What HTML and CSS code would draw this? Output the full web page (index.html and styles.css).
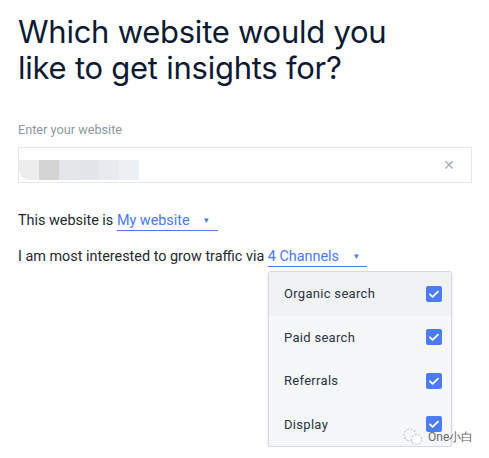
FILE: index.html
```html
<!DOCTYPE html>
<html lang="en">
<head>
  <meta charset="UTF-8">
  <meta name="viewport" content="width=device-width, initial-scale=1.0">
  <link rel="stylesheet" href="styles.css">
  <title>Get insights</title>
</head>
<body>
  <div class="container">
    <h1 class="title">Which website would you<br>like to get insights for?</h1>

    <label class="field-label" for="site">Enter your website</label>
    <div class="field">
      <div class="blur">
        <span class="px px1"></span><span class="px px2"></span><span class="px px3"></span><span class="px px4"></span><span class="px px5"></span><span class="px px6"></span>
      </div>
      <span class="clear">&#x2715;</span>
    </div>

    <div class="line">This website is <span class="select select-site">My website <span class="caret">&#9662;</span></span></div>
    <div class="line">I am most interested to grow traffic via <span class="select select-channels">4 Channels <span class="caret">&#9662;</span></span></div>

    <div class="dropdown">
      <div class="dropdown-item active">Organic search <span class="check"><svg viewBox="0 0 16 16" width="16" height="16"><path d="M4 8.3l2.6 2.5L12 5.6" fill="none" stroke="#fff" stroke-width="1.8" stroke-linecap="round" stroke-linejoin="round"/></svg></span></div>
      <div class="dropdown-item">Paid search <span class="check"><svg viewBox="0 0 16 16" width="16" height="16"><path d="M4 8.3l2.6 2.5L12 5.6" fill="none" stroke="#fff" stroke-width="1.8" stroke-linecap="round" stroke-linejoin="round"/></svg></span></div>
      <div class="dropdown-item">Referrals <span class="check"><svg viewBox="0 0 16 16" width="16" height="16"><path d="M4 8.3l2.6 2.5L12 5.6" fill="none" stroke="#fff" stroke-width="1.8" stroke-linecap="round" stroke-linejoin="round"/></svg></span></div>
      <div class="dropdown-item">Display <span class="check"><svg viewBox="0 0 16 16" width="16" height="16"><path d="M4 8.3l2.6 2.5L12 5.6" fill="none" stroke="#fff" stroke-width="1.8" stroke-linecap="round" stroke-linejoin="round"/></svg></span></div>
    </div>
  </div>

  <div class="watermark">
    <svg viewBox="0 0 22 18" width="22" height="18"><circle cx="8" cy="7" r="6" fill="none" stroke="#c8c8c8" stroke-width="1.2" stroke-dasharray="2 1.5"/><circle cx="14.5" cy="11.5" r="5" fill="rgba(255,255,255,0.7)" stroke="#c8c8c8" stroke-width="1.2" stroke-dasharray="2 1.5"/></svg>
    <span>One小白</span>
  </div>
</body>
</html>
```

FILE: styles.css
```css
body {
  margin: 0;
  padding: 0;
  background: #fff;
  font-family: Roboto, "Liberation Sans", sans-serif;
  color: #2a2f36;
}

.container {
  padding: 14px 18px 0;
}

.title {
  margin: 0;
  font-family: Inter, "Open Sans", sans-serif;
  font-weight: 400;
  font-size: 31px;
  line-height: 36px;
  color: #0c1a33;
  letter-spacing: -0.25px;
}

.field-label {
  display: block;
  margin-top: 37px;
  font-size: 12.7px;
  line-height: 14px;
  color: #8e97a3;
}

.field {
  margin-top: 10px;
  border: 1px solid #e3e6ea;
  display: flex;
  align-items: center;
  justify-content: space-between;
  width: 454px;
  box-sizing: border-box;
  height: 36px;
}

.blur {
  display: flex;
  height: 100%;
  align-items: flex-end;
}

.px {
  display: block;
  width: 20px;
  height: 20px;
  margin-bottom: 2px;
}

.px1 { background: #ededed; border-radius: 0 0 0 10px; }
.px2 { background: #d4d4d4; }
.px3 { background: #e4e6ea; }
.px4 { background: #e2e5ea; }
.px5 { background: #e8eaee; }
.px6 { background: #eef1f4; }

.clear {
  color: #a7afba;
  font-size: 14px;
  margin-right: 16px;
}

.line {
  margin: 0;
  font-size: 14.4px;
  line-height: 16px;
  color: #252a31;
}

.field + .line {
  margin-top: 29px;
}

.line + .line {
  margin-top: 17px;
}

.select {
  color: #4b7bf5;
  border-bottom: 1.5px solid #4b7bf5;
  padding-bottom: 1px;
  display: inline-block;
}

.select-site {
  width: 101px;
}

.select-channels {
  width: 99px;
}

.caret {
  font-size: 9px;
  margin-left: 11px;
  vertical-align: 2px;
}

.dropdown {
  margin: 4px 0 0 250px;
  width: 184px;
  background: #f5f7fb;
  border: 1px solid #d6d9de;
  border-radius: 3px;
  box-shadow: 0 1px 3px rgba(0, 0, 0, 0.12);
  box-sizing: border-box;
}

.dropdown-item {
  height: 43.5px;
  display: flex;
  align-items: center;
  justify-content: space-between;
  padding: 0 9px 0 15px;
  font-size: 13px;
  color: #2b3440;
  letter-spacing: 0.3px;
}

.dropdown-item.active {
  background: #f1f2f4;
}

.check {
  width: 16px;
  height: 16px;
  border-radius: 2px;
  background: #4b7bf5;
  display: flex;
}

.watermark {
  position: absolute;
  left: 402px;
  top: 428px;
  display: flex;
  align-items: center;
  gap: 4px;
  font-size: 12px;
  color: #666;
  z-index: 2;
}
```
